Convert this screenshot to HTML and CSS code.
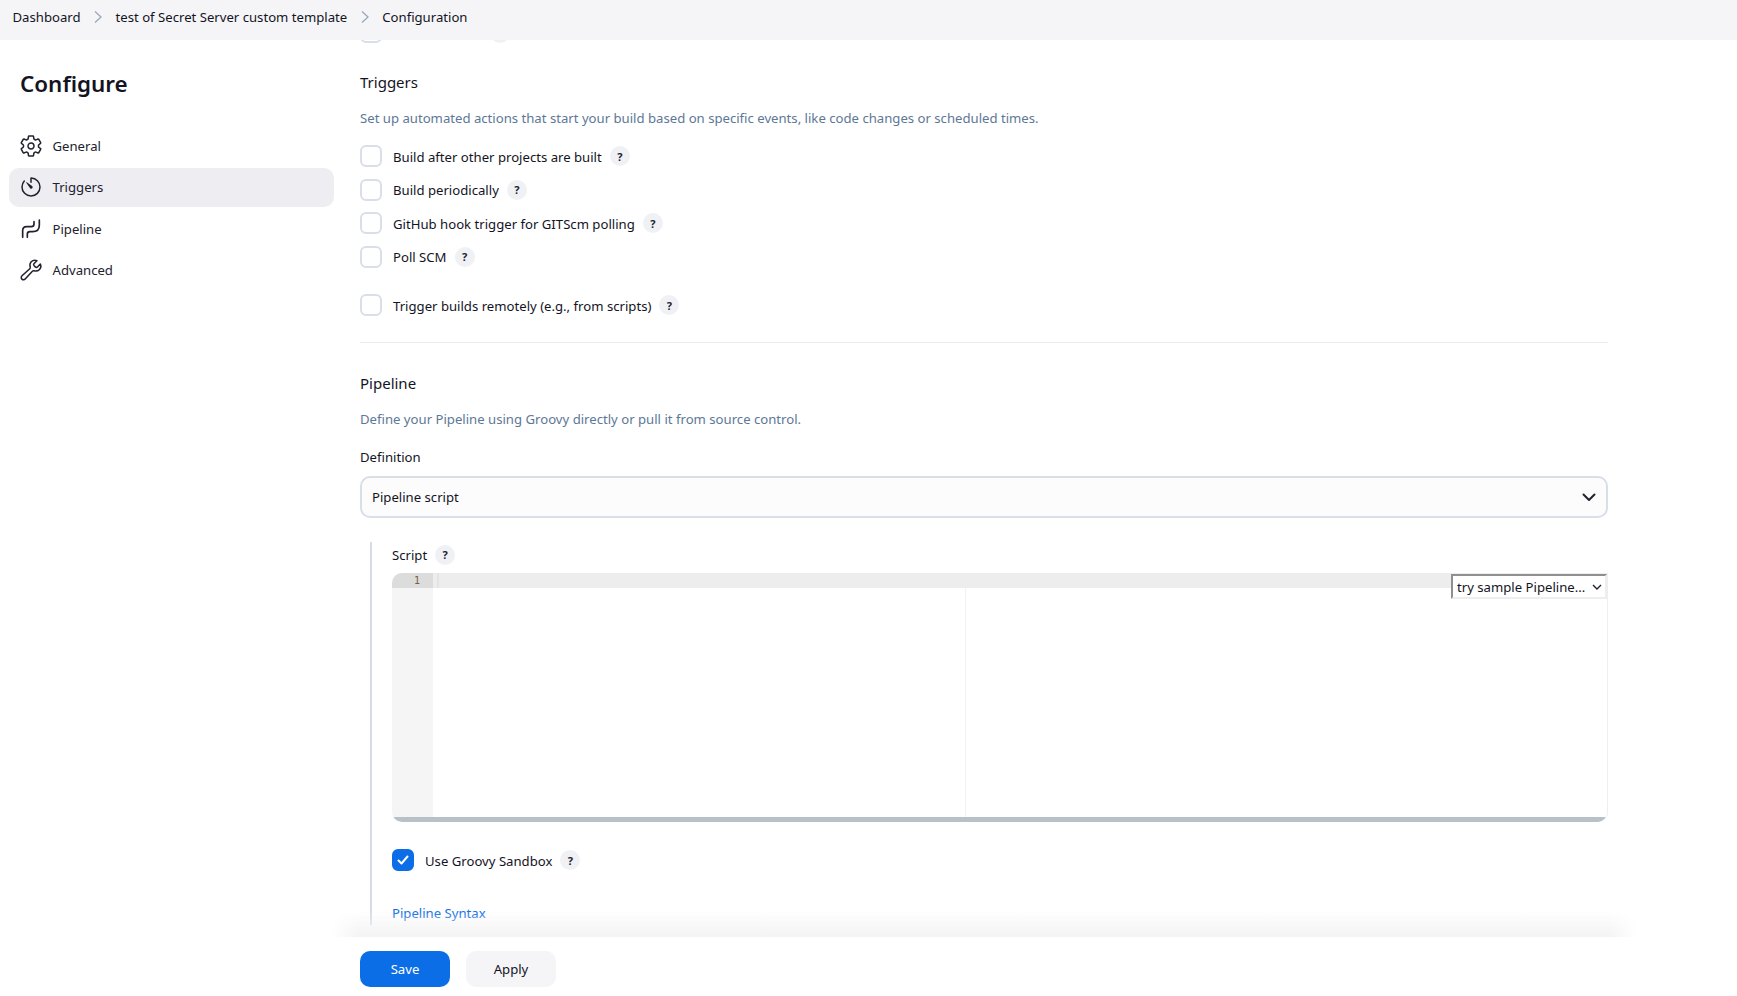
FILE: index.html
```html
<!DOCTYPE html>
<html lang="en">
<head>
<meta charset="utf-8">
<title>Configuration</title>
<link rel="stylesheet" href="styles.css">
</head>
<body>
<header class="topbar">
  <a class="crumb">Dashboard</a>
  <svg class="chev" viewBox="0 0 10 14"><path d="M2 1.5 8 7l-6 5.5"/></svg>
  <a class="crumb">test of Secret Server custom template</a>
  <svg class="chev" viewBox="0 0 10 14"><path d="M2 1.5 8 7l-6 5.5"/></svg>
  <a class="crumb">Configuration</a>
</header>
<div class="page">
  <aside class="side">
    <h1 class="side-title">Configure</h1>
    <nav class="nav">
      <a class="nav-item">
        <svg class="nav-icon" viewBox="0 0 512 512"><path class="ln" d="M262.29 192.31a64 64 0 1057.4 57.4 64.13 64.13 0 00-57.4-57.4zM416.39 256a154.34 154.34 0 01-1.53 20.79l45.21 35.46a10.81 10.81 0 012.45 13.75l-42.77 74a10.81 10.81 0 01-13.14 4.59l-44.9-18.08a16.11 16.11 0 00-15.17 1.75A164.48 164.48 0 01325 400.8a15.94 15.94 0 00-8.82 12.14l-6.73 47.89a11.08 11.08 0 01-10.68 9.17h-85.54a11.11 11.11 0 01-10.69-8.87l-6.72-47.82a16.07 16.07 0 00-9-12.22 155.3 155.3 0 01-21.46-12.57 16 16 0 00-15.11-1.71l-44.89 18.07a10.81 10.81 0 01-13.14-4.58l-42.77-74a10.8 10.8 0 012.45-13.75l38.21-30a16.05 16.05 0 006-14.08c-.36-4.17-.58-8.33-.58-12.5s.21-8.27.58-12.35a16 16 0 00-6.07-13.94l-38.19-30A10.81 10.81 0 0149.48 186l42.77-74a10.81 10.81 0 0113.14-4.59l44.9 18.08a16.11 16.11 0 0015.17-1.75A164.48 164.48 0 01187 111.2a15.94 15.94 0 008.82-12.14l6.73-47.89A11.08 11.08 0 01213.23 42h85.54a11.11 11.11 0 0110.69 8.87l6.72 47.82a16.07 16.07 0 009 12.22 155.3 155.3 0 0121.46 12.57 16 16 0 0015.11 1.71l44.89-18.07a10.81 10.81 0 0113.14 4.58l42.77 74a10.8 10.8 0 01-2.45 13.75l-38.21 30a16.05 16.05 0 00-6.05 14.08c.33 4.14.55 8.3.55 12.47z"/></svg>
        <span>General</span>
      </a>
      <a class="nav-item is-active">
        <svg class="nav-icon" viewBox="0 0 512 512"><path class="ln" d="M112.91 128A191.85 191.85 0 0064 254c-1.18 106.35 85.65 193.8 192 194 106.2.2 192-85.83 192-192 0-104.54-83.55-189.61-187.5-192a4.36 4.36 0 00-4.5 4.37V152"/><path class="fl" d="M233.38 278.63l-79-113a8.13 8.13 0 0111.32-11.32l113 79a32.5 32.5 0 01-37.25 53.26 33.21 33.21 0 01-8.07-7.94z"/></svg>
        <span>Triggers</span>
      </a>
      <a class="nav-item">
        <svg class="nav-icon" viewBox="-3 -3 72 72"><path class="ln3" d="M8 58V38Q8 26 20 26H34Q42 26 42 18V11M22 58V48Q22 41 30 41H38Q58 41 58 22V6"/></svg>
        <span>Pipeline</span>
      </a>
      <a class="nav-item">
        <svg class="nav-icon" viewBox="0 0 512 512"><path class="ln" d="M393.87 190a32.1 32.1 0 01-45.25 0l-26.57-26.57a32.09 32.09 0 010-45.26L382.19 58a1 1 0 00-.3-1.64c-38.82-16.64-89.15-8.16-121.11 23.57-30.58 30.35-32.32 76-21.12 115.84a31.93 31.93 0 01-9.06 32.08L64 380a48.17 48.17 0 1068 68l153.86-167a31.93 31.93 0 0131.6-9.13c39.54 10.59 84.54 8.6 114.72-21.19 32.49-32 39.5-88.56 23.75-120.93a1 1 0 00-1.6-.26z"/></svg>
        <span>Advanced</span>
      </a>
    </nav>
  </aside>
  <main class="main">
    <div class="peek"><span class="box"></span><span class="help peek-help"></span></div>

    <section class="section triggers">
      <h2 class="sec-title">Triggers</h2>
      <p class="sec-desc">Set up automated actions that start your build based on specific events, like code changes or scheduled times.</p>
      <div class="checks">
        <label class="check"><span class="box"></span><span class="check-label">Build after other projects are built</span><span class="help">?</span></label>
        <label class="check"><span class="box"></span><span class="check-label">Build periodically</span><span class="help">?</span></label>
        <label class="check"><span class="box"></span><span class="check-label">GitHub hook trigger for GITScm polling</span><span class="help">?</span></label>
        <label class="check"><span class="box"></span><span class="check-label">Poll SCM</span><span class="help">?</span></label>
        <label class="check check-far"><span class="box"></span><span class="check-label">Trigger builds remotely (e.g., from scripts)</span><span class="help">?</span></label>
      </div>
    </section>

    <hr class="rule">

    <section class="section">
      <h2 class="sec-title">Pipeline</h2>
      <p class="sec-desc">Define your Pipeline using Groovy directly or pull it from source control.</p>
      <div class="field-label">Definition</div>
      <div class="select">
        <span>Pipeline script</span>
        <svg class="select-chev" viewBox="0 0 16 16"><path d="M2.500 5.500 8 11l5.500-5.500"/></svg>
      </div>
      <div class="nested">
        <div class="script-label"><span>Script</span><span class="help">?</span></div>
        <div class="editor">
          <div class="gutter"><div class="gutter-active">1</div></div>
          <div class="code">
            <div class="code-active"></div>
            <div class="margin-line"></div>
            <div class="sample"><span>try sample Pipeline...</span><svg class="sample-chev" viewBox="0 0 12 12"><path d="M2 4l4 4 4-4"/></svg></div>
          </div>
          <div class="hscroll"></div>
        </div>
        <label class="check sandbox">
          <span class="box is-checked"><svg viewBox="0 0 22 22"><path d="M6.500 11.500l3 3 6-7"/></svg></span>
          <span class="check-label">Use Groovy Sandbox</span><span class="help">?</span>
        </label>
        <a class="syntax">Pipeline Syntax</a>
      </div>
    </section>
    <div class="fade"></div>
  </main>
</div>
<footer class="footer">
  <button class="btn btn-primary">Save</button>
  <button class="btn btn-plain">Apply</button>
</footer>
</body>
</html>
```
FILE: styles.css
```css
* { box-sizing: border-box; }
html, body { height: 100%; }
body {
  margin: 0;
  height: 996px;
  overflow: hidden;
  display: flex;
  flex-direction: column;
  background: #fff;
  color: #14141f;
  font-family: "Noto Sans", "Open Sans", sans-serif;
  font-size: 13.150px;
}
.topbar {
  flex: none;
  height: 40px;
  display: flex;
  align-items: center;
  padding: 0 0 6px 12.500px;
  background: #f5f5f8;
}
.crumb { color: #14141f; white-space: nowrap; }
.chev { width: 10px; height: 14px; margin: 0 12.500px; }
.chev path { fill: none; stroke: #9ba7b8; stroke-width: 1.3; }

.page { flex: 1; min-height: 0; display: flex; }
.side { flex: none; width: 360px; padding: 24px 26px 0 9px; }
.side-title { margin: 0 0 22px 11px; font-size: 22.400px; line-height: 40px; font-weight: 600; color: #14141f; }
.nav { display: flex; flex-direction: column; gap: 2.500px; }
.nav-item {
  height: 39px;
  display: flex;
  align-items: center;
  gap: 9.500px;
  padding-left: 10px;
  border-radius: 10px;
  color: #22222e;
}
.nav-item.is-active { background: #ededf2; }
.nav-icon { width: 24px; height: 24px; flex: none; }
.ln { fill: none; stroke: #22222e; stroke-width: 32; stroke-linecap: round; stroke-linejoin: round; }
.ln3 { fill: none; stroke: #22222e; stroke-width: 5; stroke-linecap: round; stroke-linejoin: round; }
.fl { fill: #22222e; }

.main { position: relative; flex: none; width: 1248px; min-width: 0; }
.peek { height: 3px; display: flex; align-items: flex-end; overflow: hidden; }
.peek .box { flex: none; }
.help.peek-help { margin-left: 108px; }
.section { display: flex; flex-direction: column; }
.triggers { padding-top: 28px; }
.sec-title { margin: 0; font-size: 15px; line-height: 22px; font-weight: 400; color: #14141f; }
.sec-desc { margin: 14px 0 0; line-height: 22px; color: #5d7896; }
.checks { display: flex; flex-direction: column; margin-top: 10.500px; }
.check { display: flex; align-items: center; height: 33.500px; }
.check-far { margin-top: 15px; }
.box {
  flex: none;
  display: block;
  width: 22px;
  height: 22px;
  border: 2px solid #d9dee9;
  border-radius: 6px;
  background: #fff;
}
.box.is-checked { background: #0b6ee6; border-color: #0b6ee6; position: relative; }
.box.is-checked svg { position: absolute; left: -2px; top: -2px; width: 22px; height: 22px; }
.box.is-checked path { fill: none; stroke: #fff; stroke-width: 2; stroke-linecap: round; stroke-linejoin: round; }
.check-label { margin-left: 11px; padding-top: 1px; color: #14141f; white-space: nowrap; }
.help {
  flex: none;
  width: 20px;
  height: 20px;
  margin-left: 8px;
  border-radius: 50%;
  background: #eff1f5;
  color: #22222e;
  display: flex;
  align-items: center;
  justify-content: center;
  font-size: 11px;
  font-weight: 700;
}
.rule { margin: 20px 0 0; border: 0; border-top: 1px solid #ebedf2; }
.rule + .section { padding-top: 29px; }

.field-label { margin-top: 15.500px; line-height: 22px; color: #14141f; }
.select {
  margin-top: 8px;
  height: 42px;
  display: flex;
  align-items: center;
  justify-content: space-between;
  padding: 0 9px 0 10px;
  border: 2px solid #d9dee9;
  border-radius: 10px;
  background: #fcfcfd;
}
.select-chev { width: 16px; height: 16px; }
.select-chev path { fill: none; stroke: #22222e; stroke-width: 2; stroke-linecap: round; stroke-linejoin: round; }

.nested {
  margin: 24px 0 0 10px;
  padding-left: 20px;
  border-left: 2px solid #d5dce8;
  display: flex;
  flex-direction: column;
}
.script-label { display: flex; align-items: center; height: 26px; margin-bottom: 5.500px; }
.editor {
  position: relative;
  height: 249px;
  display: flex;
  overflow: hidden;
  border-radius: 10px 0 10px 10px;
  border-right: 1px solid #eeeeee;
}
.gutter { flex: none; width: 41px; background: #f5f5f5; }
.gutter-active {
  height: 15px;
  padding-right: 13px;
  background: #dcdcdc;
  text-align: right;
  font-family: "DejaVu Sans Mono", "Liberation Mono", monospace;
  font-size: 10px;
  line-height: 15px;
  color: #7a5c3e;
}
.code { position: relative; flex: 1; min-width: 0; }
.code-active {
  height: 15px;
  background: linear-gradient(to right, #ededed 4px, #e3e3e3 4px, #e3e3e3 6px, #ededed 6px);
}
.margin-line { position: absolute; left: 532px; top: 15px; bottom: 0; width: 1px; background: #f2f2f2; }
.sample {
  position: absolute;
  right: 0;
  top: 1px;
  width: 156px;
  height: 25px;
  display: flex;
  align-items: center;
  justify-content: space-between;
  padding: 0 2px 0 4px;
  background: #fff;
  border: 2px solid;
  border-color: #8f8f8f #eeeeee #eeeeee #8f8f8f;
  color: #14141f;
}
.sample-chev { width: 12px; height: 12px; flex: none; }
.sample-chev path { fill: none; stroke: #22222e; stroke-width: 1.400; }
.hscroll { position: absolute; left: 0; right: 0; bottom: 0; height: 5px; background: #b8c0c8; }

.sandbox { margin-top: 21px; height: 34px; }
.syntax { margin-top: 26px; height: 22px; line-height: 20px; color: #0b6ee6; }
.fade {
  position: absolute;
  left: -28px;
  right: -28px;
  bottom: 0;
  height: 26px;
  background: linear-gradient(to bottom, rgba(244,244,245,0), #f3f3f4);
  -webkit-mask-image: linear-gradient(to right, transparent, #000 26px, #000 calc(100% - 26px), transparent);
  mask-image: linear-gradient(to right, transparent, #000 26px, #000 calc(100% - 26px), transparent);
  pointer-events: none;
}

.footer {
  flex: none;
  height: 59px;
  display: flex;
  gap: 16px;
  align-items: flex-start;
  padding: 14px 0 0 360px;
  background: #fff;
}
.btn {
  width: 90px;
  height: 36px;
  border: 0;
  border-radius: 10px;
  font-family: inherit;
  font-size: 13.150px;
}
.btn-primary { background: #0b6ee6; color: #fff; }
.btn-plain { background: #f5f5f8; color: #14141f; }
```
